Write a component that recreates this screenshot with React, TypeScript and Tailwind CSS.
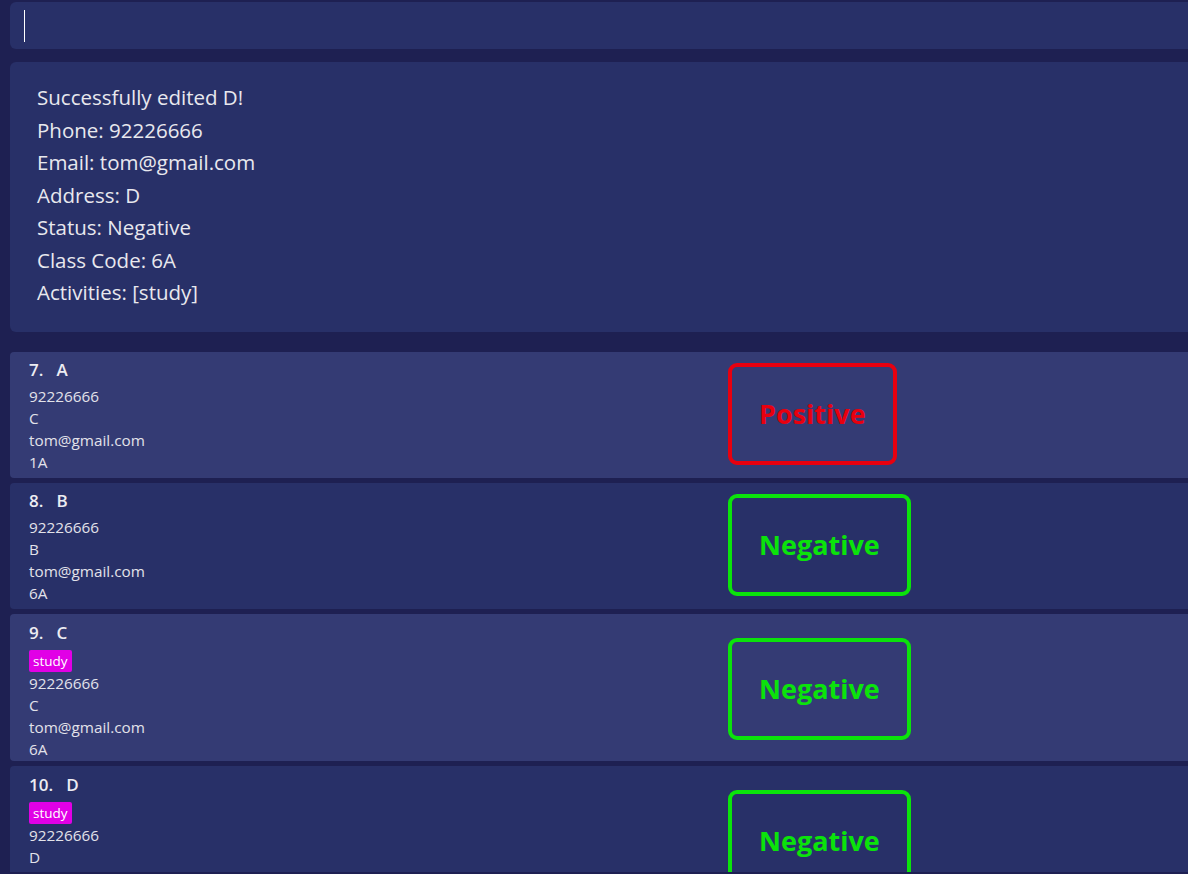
import React from "react";

type Person = {
  idx: number;
  name: string;
  tags: string[];
  phone: string;
  address: string;
  email: string;
  cls: string;
  status: "Positive" | "Negative";
};

const people: Person[] = [
  { idx: 7, name: "A", tags: [], phone: "92226666", address: "C", email: "tom@gmail.com", cls: "1A", status: "Positive" },
  { idx: 8, name: "B", tags: [], phone: "92226666", address: "B", email: "tom@gmail.com", cls: "6A", status: "Negative" },
  { idx: 9, name: "C", tags: ["study"], phone: "92226666", address: "C", email: "tom@gmail.com", cls: "6A", status: "Negative" },
  { idx: 10, name: "D", tags: ["study"], phone: "92226666", address: "D", email: "tom@gmail.com", cls: "6A", status: "Negative" },
];

const resultLines = [
  "Successfully edited D!",
  "Phone: 92226666",
  "Email: tom@gmail.com",
  "Address: D",
  "Status: Negative",
  "Class Code: 6A",
  "Activities: [study]",
];

function Card({ p, odd }: { p: Person; odd: boolean }) {
  const hasTag = p.tags.length > 0;
  return (
    <div
      className={`flex shrink-0 items-center rounded-l-[4px] pl-[19px] ${
        odd ? "bg-[#343b74]" : "bg-[#283068]"
      } ${hasTag ? "pb-[1px] pt-[7px]" : "pb-[5px] pt-[6px]"}`}
    >
      <div className="flex w-[699px] shrink-0 flex-col">
        <div className="flex h-[24px] items-center text-[17px] font-semibold leading-[24px] text-[#ececf2]">
          <span>{p.idx}.</span>
          <span className="ml-[13px]">{p.name}</span>
        </div>
        <div className="mt-[3px] flex flex-col text-[15.3px] leading-[22px] text-[#e2e2ea]">
          {hasTag && (
            <div className="mt-[2px] flex gap-[4px]">
              {p.tags.map((t) => (
                <span
                  key={t}
                  className="h-[22px] rounded-[2px] bg-[#e100e6] px-[4px] text-[13.5px] font-medium leading-[22px] text-white"
                >
                  {t}
                </span>
              ))}
            </div>
          )}
          <div>{p.phone}</div>
          <div>{p.address}</div>
          <div>{p.email}</div>
          <div>{p.cls}</div>
        </div>
      </div>
      <div
        className={`mb-[3px] flex h-[102px] items-center rounded-[9px] border-[4px] px-[27px] text-[27px] font-bold ${
          p.status === "Positive"
            ? "border-[#e8000f] text-[#e8000f]"
            : "border-[#0be30b] text-[#0be30b]"
        }`}
      >
        {p.status}
      </div>
    </div>
  );
}

export default function App() {
  return (
    <div className="h-[874px] w-full overflow-hidden bg-[#1e2052] pl-[10px] pt-[2px] font-['Open_Sans','Noto_Sans',sans-serif]">
      <div className="flex h-[47px] items-center rounded-l-[6px] bg-[#283068] pl-[14px]">
        <div className="h-[32px] w-px bg-white" />
      </div>
      <div className="mt-[13px] h-[270px] rounded-l-[6px] bg-[#283068] pl-[27px] pt-[19px] text-[20.5px] leading-[32.5px] text-[#e8e8ee]">
        {resultLines.map((l) => (
          <div key={l}>{l}</div>
        ))}
      </div>
      <div className="mt-[20px] flex h-[520px] flex-col gap-[5px] overflow-hidden">
        {people.map((p, i) => (
          <Card key={p.idx} p={p} odd={i % 2 === 0} />
        ))}
      </div>
    </div>
  );
}
